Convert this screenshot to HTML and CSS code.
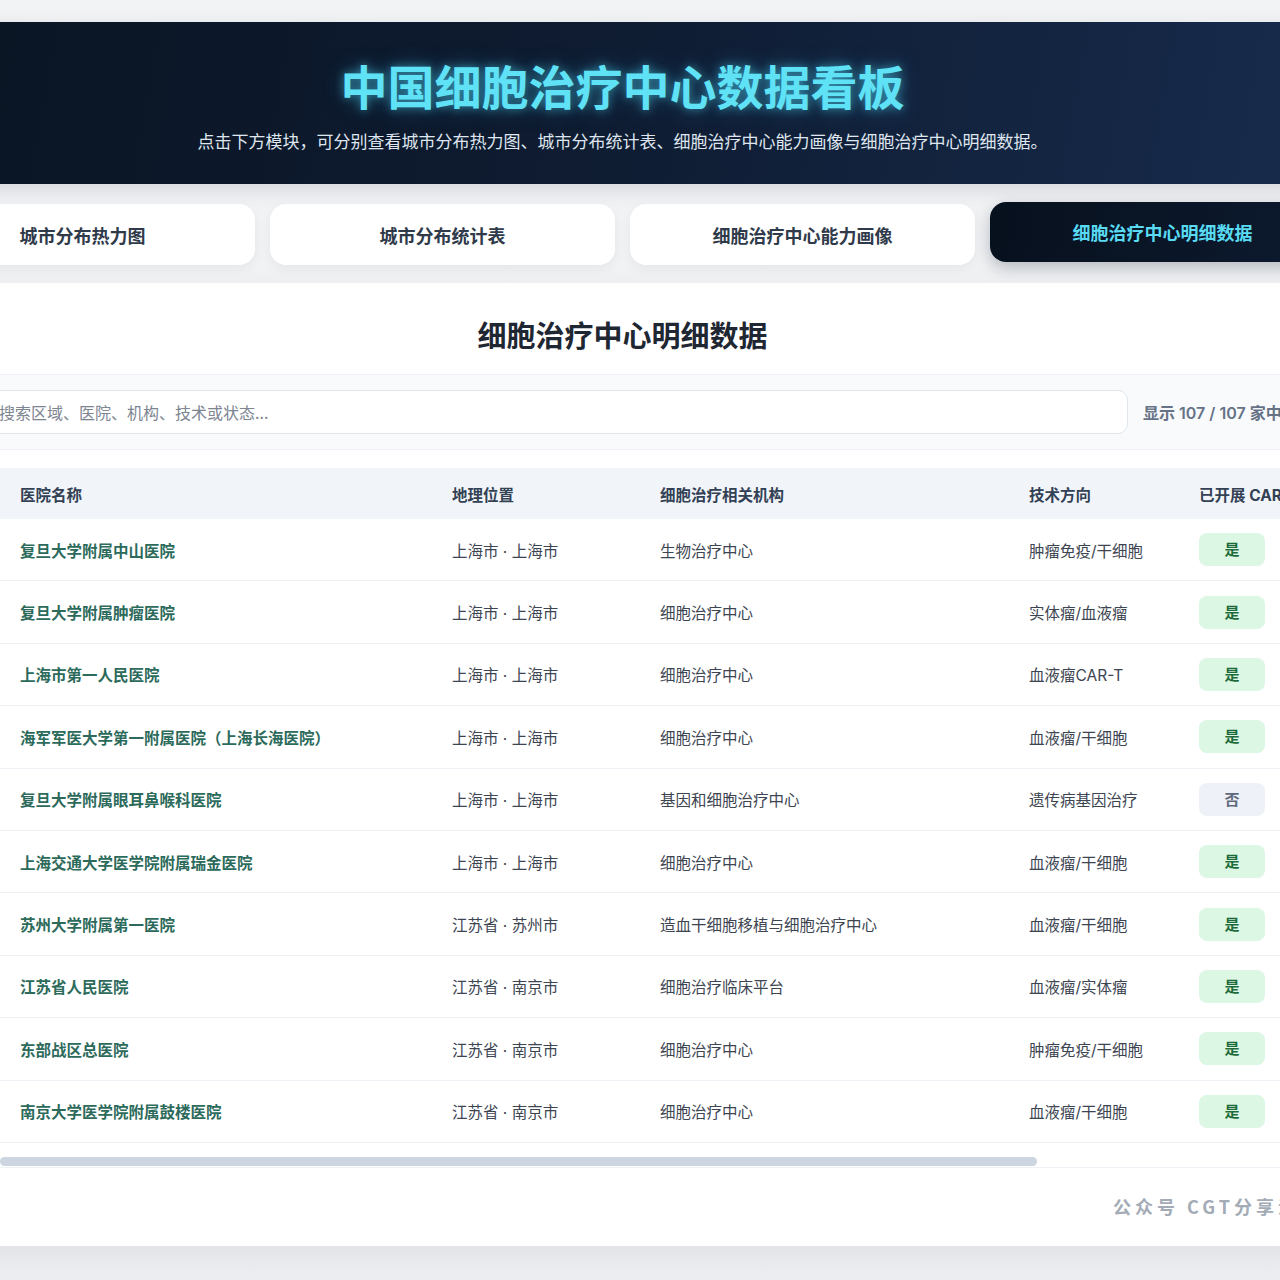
FILE: index.html
```html
<!DOCTYPE html>
<html lang="zh-CN">
<head>
  <meta charset="UTF-8" />
  <meta name="viewport" content="width=device-width, initial-scale=1.0" />
  <title>中国细胞治疗中心数据看板</title>
  <link rel="stylesheet" href="styles.css">
</head>
<body>
  <div class="page">
    <header class="hero">
      <h1>中国细胞治疗中心数据看板</h1>
      <p>点击下方模块，可分别查看城市分布热力图、城市分布统计表、细胞治疗中心能力画像与细胞治疗中心明细数据。</p>
    </header>

    <nav class="tabs">
      <a class="tab" href="#heatmap">城市分布热力图</a>
      <a class="tab" href="#stats">城市分布统计表</a>
      <a class="tab" href="#profile">细胞治疗中心能力画像</a>
      <a class="tab active" href="#detail">细胞治疗中心明细数据</a>
    </nav>

    <section class="card" id="detail">
      <h2>细胞治疗中心明细数据</h2>

      <div class="toolbar">
        <input class="search" type="text" placeholder="搜索区域、医院、机构、技术或状态..." />
        <span class="count">显示 107 / 107 家中心</span>
      </div>

      <div class="table-wrap">
        <table class="centers">
          <colgroup>
            <col class="c-name"><col class="c-loc"><col class="c-org"><col class="c-tech"><col class="c-car"><col class="c-note">
          </colgroup>
          <thead>
            <tr>
              <th>医院名称</th>
              <th>地理位置</th>
              <th>细胞治疗相关机构</th>
              <th>技术方向</th>
              <th>已开展 CAR-T 临床研究</th>
              <th>备注</th>
            </tr>
          </thead>
          <tbody>
            <tr><td class="name">复旦大学附属中山医院</td><td>上海市 · 上海市</td><td>生物治疗中心</td><td>肿瘤免疫/干细胞</td><td><span class="badge yes">是</span></td><td>—</td></tr>
            <tr><td class="name">复旦大学附属肿瘤医院</td><td>上海市 · 上海市</td><td>细胞治疗中心</td><td>实体瘤/血液瘤</td><td><span class="badge yes">是</span></td><td>—</td></tr>
            <tr><td class="name">上海市第一人民医院</td><td>上海市 · 上海市</td><td>细胞治疗中心</td><td>血液瘤CAR-T</td><td><span class="badge yes">是</span></td><td>—</td></tr>
            <tr><td class="name">海军军医大学第一附属医院（上海长海医院）</td><td>上海市 · 上海市</td><td>细胞治疗中心</td><td>血液瘤/干细胞</td><td><span class="badge yes">是</span></td><td>—</td></tr>
            <tr><td class="name">复旦大学附属眼耳鼻喉科医院</td><td>上海市 · 上海市</td><td>基因和细胞治疗中心</td><td>遗传病基因治疗</td><td><span class="badge no">否</span></td><td>—</td></tr>
            <tr><td class="name">上海交通大学医学院附属瑞金医院</td><td>上海市 · 上海市</td><td>细胞治疗中心</td><td>血液瘤/干细胞</td><td><span class="badge yes">是</span></td><td>—</td></tr>
            <tr><td class="name">苏州大学附属第一医院</td><td>江苏省 · 苏州市</td><td>造血干细胞移植与细胞治疗中心</td><td>血液瘤/干细胞</td><td><span class="badge yes">是</span></td><td>—</td></tr>
            <tr><td class="name">江苏省人民医院</td><td>江苏省 · 南京市</td><td>细胞治疗临床平台</td><td>血液瘤/实体瘤</td><td><span class="badge yes">是</span></td><td>—</td></tr>
            <tr><td class="name">东部战区总医院</td><td>江苏省 · 南京市</td><td>细胞治疗中心</td><td>肿瘤免疫/干细胞</td><td><span class="badge yes">是</span></td><td>—</td></tr>
            <tr><td class="name">南京大学医学院附属鼓楼医院</td><td>江苏省 · 南京市</td><td>细胞治疗中心</td><td>血液瘤/干细胞</td><td><span class="badge yes">是</span></td><td>—</td></tr>
          </tbody>
        </table>
        <div class="scrollbar"><div class="scrollbar-thumb"></div></div>
      </div>

      <div class="watermark">公众号 CGT分享汇</div>
    </section>
  </div>
</body>
</html>
```

FILE: styles.css
```css
body {
  margin: 0;
  overflow: hidden;
  font-family: Inter, "Noto Sans CJK SC", sans-serif;
  background: linear-gradient(to bottom, #f2f3f5, #eceef1);
  color: #334155;
}
.page {
  width: 1425px;
  margin-left: -90px;
  padding-top: 22px;
  padding-bottom: 40px;
}
.hero {
  background: linear-gradient(100deg, #0a1422 0%, #0e1b30 45%, #182c4e 100%);
  text-align: center;
  padding: 33px 0 30px;
  margin: 0 -40px;
  box-shadow: 0 6px 18px rgba(15, 23, 42, 0.12);
}
.hero h1 {
  margin: 0;
  font-family: "Noto Sans CJK SC", sans-serif;
  font-size: 47px;
  line-height: 59px;
  font-weight: 700;
  color: #5fe2f6;
  text-shadow: 0 0 10px rgba(80, 215, 245, 0.55), 0 0 22px rgba(60, 190, 235, 0.35);
}
.hero p {
  margin: 14px 0 0;
  font-family: "Noto Sans CJK SC", sans-serif;
  font-size: 17px;
  line-height: 26px;
  color: #dfe6ef;
}
.tabs {
  display: grid;
  grid-template-columns: repeat(4, 1fr);
  gap: 15px;
  margin-top: 20px;
}
.tab {
  height: 61px;
  display: flex;
  align-items: center;
  justify-content: center;
  background: white;
  border-radius: 16px;
  box-shadow: 0 4px 12px rgba(15, 23, 42, 0.05);
  font-family: "Noto Sans CJK SC", sans-serif;
  font-size: 18px;
  font-weight: 700;
  color: #2f3a4a;
  text-decoration: none;
}
.tab.active {
  height: 60px;
  transform: translateY(-2px);
  background: linear-gradient(100deg, #07101d, #0d1b30);
  color: #58dbf3;
  box-shadow: 0 6px 16px rgba(8, 18, 34, 0.25);
}
.card {
  margin-top: 18px;
  background: white;
  padding: 32px 0 27px;
  box-shadow: 0 10px 30px rgba(15, 23, 42, 0.06);
}
.card h2 {
  margin: 0;
  text-align: center;
  font-family: "Noto Sans CJK SC", sans-serif;
  font-size: 29px;
  line-height: 38px;
  font-weight: 700;
  color: #1f2733;
}
.toolbar {
  display: flex;
  align-items: center;
  gap: 15px;
  margin-top: 21px;
  padding: 15px 40px 15px 74px;
  background: #f8fafc;
  border-top: 1px solid #eef2f6;
  border-bottom: 1px solid #eef2f6;
}
.search {
  flex: 1;
  height: 44px;
  box-sizing: border-box;
  padding: 0 14px;
  border: 1px solid #e1e6ed;
  border-radius: 10px;
  background: white;
  font-family: "Noto Sans CJK SC", sans-serif;
  font-size: 16px;
  color: #334155;
}
.search::placeholder {
  color: #7d8591;
}
.count {
  width: 152px;
  flex: none;
  font-size: 16px;
  font-weight: 600;
  color: #667386;
  white-space: nowrap;
}
.table-wrap {
  margin: 18px 0 0 90px;
  overflow: hidden;
}
.centers {
  width: 1600px;
  table-layout: fixed;
  border-collapse: collapse;
  font-family: Inter, "Noto Sans CJK SC", sans-serif;
  font-size: 15.5px;
}
.c-name { width: 432px; }
.c-loc { width: 208px; }
.c-org { width: 369px; }
.c-tech { width: 170px; }
.c-car { width: 221px; }
.c-note { width: 200px; }
.centers th {
  height: 51px;
  padding: 0 20px;
  background: #f1f5f9;
  text-align: left;
  font-weight: 700;
  color: #334155;
  white-space: nowrap;
}
.centers td {
  height: 61.4px;
  padding: 0 20px;
  border-bottom: 1px solid #eef1f5;
  color: #3d4552;
  white-space: nowrap;
}
.centers td.name {
  font-weight: 700;
  color: #2c6a5b;
}
.badge {
  display: inline-block;
  width: 66px;
  height: 33px;
  line-height: 33px;
  text-align: center;
  border-radius: 8px;
  font-size: 15px;
  font-weight: 700;
}
.badge.yes {
  background: #dcf7e4;
  color: #1d6b3a;
}
.badge.no {
  background: #eef1f7;
  color: #5e6a7c;
}
.scrollbar {
  margin-top: 14px;
  height: 9px;
  border-bottom: 1px solid #eef1f5;
  padding-bottom: 1px;
}
.scrollbar-thumb {
  width: 1037px;
  height: 9px;
  border-radius: 5px;
  background: #cdd5e0;
}
.watermark {
  margin-top: 25px;
  padding-left: 1203px;
  font-family: "Noto Sans CJK SC", sans-serif;
  font-size: 18px;
  line-height: 26px;
  font-weight: 700;
  letter-spacing: 4px;
  color: #a3abb6;
  white-space: nowrap;
}
```
